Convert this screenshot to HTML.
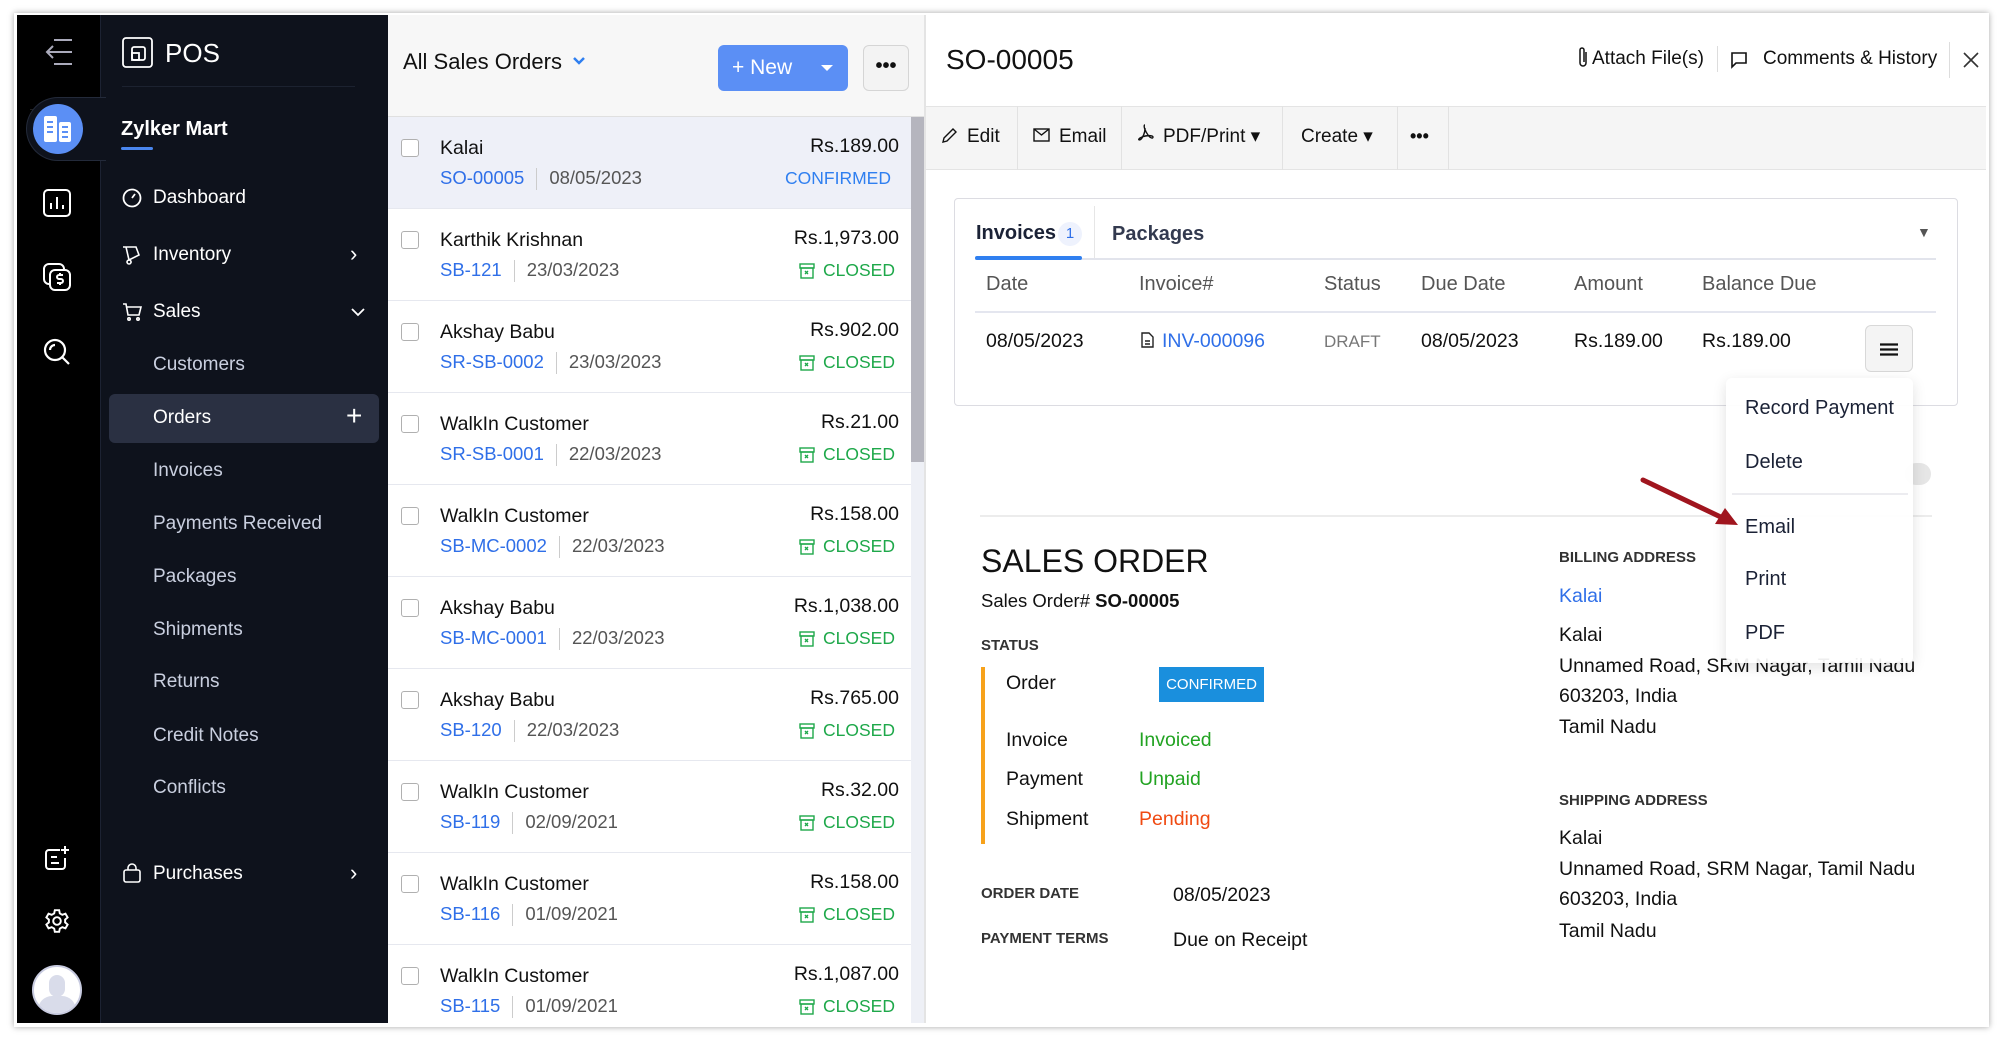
<!DOCTYPE html>
<html><head><meta charset="utf-8"><style>
*{box-sizing:border-box;margin:0;padding:0}
body{width:2000px;height:1039px;background:#fff;font-family:"Liberation Sans",sans-serif;position:relative;overflow:hidden;color:#111}
.a{position:absolute;white-space:nowrap}
.t{position:absolute;white-space:nowrap;line-height:24px}
.nav .t{color:#c9cfdf;font-size:19px}
.row{position:absolute;left:388px;width:523px;height:92px;border-bottom:1px solid #e6e8ef;background:#fff}
.row .cb{position:absolute;left:13px;top:22px;width:18px;height:18px;border:1.5px solid #b0b0b0;border-radius:3px;background:#fff}
.row .nm{position:absolute;left:52px;top:19px;font-size:19.5px;color:#111;line-height:24px}
.row .l2{position:absolute;left:52px;top:49px;font-size:18.5px;line-height:24px;color:#555}
.row .l2 b{font-weight:normal;color:#2f6fe8}
.row .l2 i{display:inline-block;width:1px;height:22px;background:#ccc;vertical-align:middle;margin:0 12px}
.row .am{position:absolute;right:12px;top:17px;font-size:19.5px;line-height:24px;color:#111}
.row .st{position:absolute;right:16px;top:49px;font-size:17.5px;line-height:24px;color:#1ea84a}
.st svg{vertical-align:-3px;margin-right:8px}
.dt{font-size:19.5px;color:#111}
.lbl{font-size:15px;font-weight:bold;color:#333}
.mi{font-size:20px;color:#1b2236}
</style></head><body>
<div class="a" style="left:14px;top:13px;width:1975px;height:1014px;box-shadow:0 0 6px rgba(0,0,0,.35);background:#fff"></div>
<div class="a" style="left:17px;top:15px;width:83px;height:1008px;background:#000"></div>
<div class="a" style="left:30px;top:109px;width:68px;height:1px;background:#222"></div>
<svg class="a" style="left:44px;top:38px" width="30" height="28" viewBox="0 0 30 28" fill="none" stroke="#aab" stroke-width="2"><path d="M10 2h18M3 14h25M10 26h18M9 8l-6 6 6 6"/></svg>
<div class="a" style="left:100px;top:15px;width:288px;height:1008px;background:#0e121c;border-left:1px solid #1c2232"></div>
<div class="a" style="left:26px;top:97px;width:80px;height:64px;background:#0e121c;border-radius:32px 0 0 32px;border:1px solid #232a3a;border-right:none"></div>
<div class="a" style="left:33px;top:104px;width:50px;height:50px;border-radius:50%;background:#5b8ff5"></div>
<svg class="a" style="left:43px;top:115px" width="30" height="28" viewBox="0 0 30 28"><rect x="1" y="1" width="13" height="26" rx="2" fill="#fff"/><rect x="16" y="7" width="12" height="20" rx="2" fill="#fff"/><path d="M4 7h6M4 12h6M4 17h6M19 12h6M19 17h6M19 22h6" stroke="#5b8ff5" stroke-width="2"/></svg>
<svg class="a" style="left:43px;top:189px" width="28" height="28" viewBox="0 0 28 28" fill="none" stroke="#fff" stroke-width="2"><rect x="1" y="1" width="26" height="26" rx="4"/><path d="M8 20v-6M14 20V8M20 20v-4"/></svg>
<svg class="a" style="left:43px;top:263px" width="28" height="28" viewBox="0 0 28 28" fill="none" stroke="#fff" stroke-width="2"><rect x="1" y="1" width="20" height="20" rx="5"/><rect x="7" y="7" width="20" height="20" rx="5" fill="#000"/><path d="M20 12h-4a2 2 0 0 0 0 4h2a2 2 0 0 1 0 4h-4M17 10v2M17 20v2"/></svg>
<svg class="a" style="left:43px;top:338px" width="28" height="28" viewBox="0 0 28 28" fill="none" stroke="#fff" stroke-width="2.2"><circle cx="12" cy="12" r="10"/><path d="M19 19l7 7M7 12a5 5 0 0 1 5-5"/></svg>
<svg class="a" style="left:44px;top:845px" width="26" height="26" viewBox="0 0 26 26" fill="none" stroke="#fff" stroke-width="2"><path d="M16 5H5a3 3 0 0 0-3 3v13a3 3 0 0 0 3 3h13a3 3 0 0 0 3-3v-8M7 12h6M7 18h8M21 1v8M17 5h8"/></svg>
<svg class="a" style="left:44px;top:908px" width="26" height="26" viewBox="0 0 24 24" fill="none" stroke="#fff" stroke-width="1.8"><circle cx="12" cy="12" r="3.5"/><path d="M10 2h4l.6 3 2.3 1.3 2.9-1 2 3.4-2.3 2v2.6l2.3 2-2 3.4-2.9-1-2.3 1.3-.6 3h-4l-.6-3-2.3-1.3-2.9 1-2-3.4 2.3-2v-2.6l-2.3-2 2-3.4 2.9 1L9.4 5z"/></svg>
<div class="a" style="left:32px;top:965px;width:50px;height:50px;border-radius:50%;background:#fff;overflow:hidden;border:2px solid #c8cbe0"><div class="a" style="left:15px;top:8px;width:16px;height:22px;border-radius:8px;background:#d9dcea"></div><div class="a" style="left:4px;top:29px;width:38px;height:24px;border-radius:14px 14px 0 0;background:#d9dcea"></div></div>
<div class="nav">
<svg class="a" style="left:122px;top:37px" width="31" height="31" viewBox="0 0 31 31" fill="none" stroke="#fff" stroke-width="1.8"><rect x="1" y="1" width="29" height="29" rx="3"/><rect x="10" y="10" width="13" height="13" rx="2"/><rect x="10" y="16" width="7" height="7"/></svg>
<div class="t" style="left:165px;top:40px;font-size:26px;color:#fff;line-height:26px">POS</div>
<div class="a" style="left:122px;top:86px;width:233px;height:1px;background:#1c2230"></div>
<div class="t" style="left:121px;top:117px;font-size:20px;color:#fff;font-weight:bold">Zylker Mart</div>
<div class="a" style="left:121px;top:147px;width:32px;height:3px;background:#4a86ee;border-radius:2px"></div>
<svg class="a" style="left:122px;top:188px" width="20" height="20" viewBox="0 0 20 20" fill="none" stroke="#fff" stroke-width="1.8"><circle cx="10" cy="10" r="8.5"/><path d="M10 10l3-4"/></svg>
<div class="t" style="left:153px;top:186px;color:#fff">Dashboard</div>
<svg class="a" style="left:122px;top:245px" width="20" height="20" viewBox="0 0 20 20" fill="none" stroke="#fff" stroke-width="1.6"><path d="M1 2h3l3 13 10-5-3-8zM7 15a2 2 0 1 0 0.1 0"/></svg>
<div class="t" style="left:153px;top:243px;color:#fff">Inventory</div>
<div class="t" style="left:350px;top:242px;color:#fff;font-size:22px">›</div>
<svg class="a" style="left:122px;top:302px" width="20" height="20" viewBox="0 0 20 20" fill="none" stroke="#fff" stroke-width="1.6"><path d="M1 2h3l2 11h11l2-8H5"/><circle cx="7" cy="17" r="1.2"/><circle cx="16" cy="17" r="1.2"/></svg>
<div class="t" style="left:153px;top:300px;color:#fff">Sales</div>
<svg class="a" style="left:350px;top:307px" width="16" height="10" viewBox="0 0 16 10" fill="none" stroke="#fff" stroke-width="1.8"><path d="M2 2l6 6 6-6"/></svg>
<div class="t" style="left:153px;top:353px">Customers</div>
<div class="a" style="left:109px;top:394px;width:270px;height:49px;background:#2a3042;border-radius:6px"></div>
<div class="t" style="left:153px;top:406px;color:#fff">Orders</div>
<div class="t" style="left:346px;top:404px;color:#fff;font-size:28px;font-weight:300">+</div>
<div class="t" style="left:153px;top:459px">Invoices</div>
<div class="t" style="left:153px;top:512px">Payments Received</div>
<div class="t" style="left:153px;top:565px">Packages</div>
<div class="t" style="left:153px;top:618px">Shipments</div>
<div class="t" style="left:153px;top:670px">Returns</div>
<div class="t" style="left:153px;top:724px">Credit Notes</div>
<div class="t" style="left:153px;top:776px">Conflicts</div>
<svg class="a" style="left:123px;top:863px" width="18" height="20" viewBox="0 0 18 20" fill="none" stroke="#fff" stroke-width="1.6"><rect x="1" y="7" width="16" height="12" rx="2"/><path d="M5 7V5a4 4 0 0 1 8 0v2"/></svg>
<div class="t" style="left:153px;top:862px;color:#fff">Purchases</div>
<div class="t" style="left:350px;top:861px;color:#fff;font-size:22px">›</div>
</div>
<div class="a" style="left:388px;top:15px;width:537px;height:102px;background:#f7f7f7;border-bottom:1px solid #e0e0e0"></div>
<div class="t" style="left:403px;top:50px;font-size:22px;color:#111">All Sales Orders <svg width="14" height="10" viewBox="0 0 14 10" fill="none" stroke="#2f7ff0" stroke-width="2.5" style="vertical-align:3px;margin-left:4px"><path d="M2 2l5 5 5-5"/></svg></div>
<div class="a" style="left:718px;top:45px;width:130px;height:46px;background:#5b8ff5;border-radius:6px"></div>
<div class="t" style="left:732px;top:56px;font-size:21px;color:#fff">+ New</div>
<svg class="a" style="left:820px;top:64px" width="14" height="8"><path d="M1 1h12L7 7z" fill="#fff"/></svg>
<div class="a" style="left:863px;top:45px;width:46px;height:46px;border:1px solid #d5d5d5;border-radius:6px;background:#f3f3f3;text-align:center;line-height:40px;font-size:20px;font-weight:bold">•••</div>
<div class="row" style="top:117px;background:#eef0f8"><div class="cb"></div><div class="nm">Kalai</div><div class="l2"><b>SO-00005</b><i></i>08/05/2023</div><div class="am">Rs.189.00</div><div class="st" style="color:#2f7ff0;right:20px">CONFIRMED</div></div>
<div class="row" style="top:209px"><div class="cb"></div><div class="nm">Karthik Krishnan</div><div class="l2"><b>SB-121</b><i></i>23/03/2023</div><div class="am">Rs.1,973.00</div><div class="st"><svg width="16" height="16" viewBox="0 0 16 16" fill="none" stroke="#1ea84a" stroke-width="1.4"><rect x="1" y="1" width="14" height="4"/><rect x="2" y="5" width="12" height="10"/><path d="M6 8l3 3M9 8l-3 3"/></svg>CLOSED</div></div>
<div class="row" style="top:301px"><div class="cb"></div><div class="nm">Akshay Babu</div><div class="l2"><b>SR-SB-0002</b><i></i>23/03/2023</div><div class="am">Rs.902.00</div><div class="st"><svg width="16" height="16" viewBox="0 0 16 16" fill="none" stroke="#1ea84a" stroke-width="1.4"><rect x="1" y="1" width="14" height="4"/><rect x="2" y="5" width="12" height="10"/><path d="M6 8l3 3M9 8l-3 3"/></svg>CLOSED</div></div>
<div class="row" style="top:393px"><div class="cb"></div><div class="nm">WalkIn Customer</div><div class="l2"><b>SR-SB-0001</b><i></i>22/03/2023</div><div class="am">Rs.21.00</div><div class="st"><svg width="16" height="16" viewBox="0 0 16 16" fill="none" stroke="#1ea84a" stroke-width="1.4"><rect x="1" y="1" width="14" height="4"/><rect x="2" y="5" width="12" height="10"/><path d="M6 8l3 3M9 8l-3 3"/></svg>CLOSED</div></div>
<div class="row" style="top:485px"><div class="cb"></div><div class="nm">WalkIn Customer</div><div class="l2"><b>SB-MC-0002</b><i></i>22/03/2023</div><div class="am">Rs.158.00</div><div class="st"><svg width="16" height="16" viewBox="0 0 16 16" fill="none" stroke="#1ea84a" stroke-width="1.4"><rect x="1" y="1" width="14" height="4"/><rect x="2" y="5" width="12" height="10"/><path d="M6 8l3 3M9 8l-3 3"/></svg>CLOSED</div></div>
<div class="row" style="top:577px"><div class="cb"></div><div class="nm">Akshay Babu</div><div class="l2"><b>SB-MC-0001</b><i></i>22/03/2023</div><div class="am">Rs.1,038.00</div><div class="st"><svg width="16" height="16" viewBox="0 0 16 16" fill="none" stroke="#1ea84a" stroke-width="1.4"><rect x="1" y="1" width="14" height="4"/><rect x="2" y="5" width="12" height="10"/><path d="M6 8l3 3M9 8l-3 3"/></svg>CLOSED</div></div>
<div class="row" style="top:669px"><div class="cb"></div><div class="nm">Akshay Babu</div><div class="l2"><b>SB-120</b><i></i>22/03/2023</div><div class="am">Rs.765.00</div><div class="st"><svg width="16" height="16" viewBox="0 0 16 16" fill="none" stroke="#1ea84a" stroke-width="1.4"><rect x="1" y="1" width="14" height="4"/><rect x="2" y="5" width="12" height="10"/><path d="M6 8l3 3M9 8l-3 3"/></svg>CLOSED</div></div>
<div class="row" style="top:761px"><div class="cb"></div><div class="nm">WalkIn Customer</div><div class="l2"><b>SB-119</b><i></i>02/09/2021</div><div class="am">Rs.32.00</div><div class="st"><svg width="16" height="16" viewBox="0 0 16 16" fill="none" stroke="#1ea84a" stroke-width="1.4"><rect x="1" y="1" width="14" height="4"/><rect x="2" y="5" width="12" height="10"/><path d="M6 8l3 3M9 8l-3 3"/></svg>CLOSED</div></div>
<div class="row" style="top:853px"><div class="cb"></div><div class="nm">WalkIn Customer</div><div class="l2"><b>SB-116</b><i></i>01/09/2021</div><div class="am">Rs.158.00</div><div class="st"><svg width="16" height="16" viewBox="0 0 16 16" fill="none" stroke="#1ea84a" stroke-width="1.4"><rect x="1" y="1" width="14" height="4"/><rect x="2" y="5" width="12" height="10"/><path d="M6 8l3 3M9 8l-3 3"/></svg>CLOSED</div></div>
<div class="row" style="top:945px;height:78px;border:none"><div class="cb"></div><div class="nm">WalkIn Customer</div><div class="l2"><b>SB-115</b><i></i>01/09/2021</div><div class="am">Rs.1,087.00</div><div class="st"><svg width="16" height="16" viewBox="0 0 16 16" fill="none" stroke="#1ea84a" stroke-width="1.4"><rect x="1" y="1" width="14" height="4"/><rect x="2" y="5" width="12" height="10"/><path d="M6 8l3 3M9 8l-3 3"/></svg>CLOSED</div></div>
<div class="a" style="left:911px;top:117px;width:13px;height:906px;background:#eef0f6"></div>
<div class="a" style="left:911px;top:117px;width:13px;height:345px;background:#b5b5be"></div>
<div class="a" style="left:924px;top:15px;width:2px;height:1008px;background:#e4e4e4"></div>
<div class="t" style="left:946px;top:45px;font-size:28px;line-height:30px;color:#111">SO-00005</div>
<svg class="a" style="left:1577px;top:46px" width="12" height="22" viewBox="0 0 12 22" fill="none" stroke="#111" stroke-width="1.5"><path d="M9 6v11a3 3 0 0 1-6 0V4a2 2 0 0 1 4 0v12"/></svg>
<div class="t" style="left:1592px;top:47px;font-size:19px;color:#111">Attach File(s)</div>
<div class="a" style="left:1717px;top:46px;width:1px;height:26px;background:#ddd"></div>
<svg class="a" style="left:1730px;top:51px" width="18" height="18" viewBox="0 0 18 18" fill="none" stroke="#111" stroke-width="1.6"><path d="M2 2h14v10H6l-4 4z"/></svg>
<div class="t" style="left:1763px;top:47px;font-size:19px;color:#111">Comments &amp; History</div>
<div class="a" style="left:1949px;top:42px;width:1px;height:36px;background:#ddd"></div>
<svg class="a" style="left:1962px;top:51px" width="18" height="18" fill="none" stroke="#333" stroke-width="1.6"><path d="M2 2l14 14M16 2L2 16"/></svg>
<div class="a" style="left:926px;top:106px;width:1060px;height:64px;background:#f5f5f5;border-top:1px solid #e4e4e4;border-bottom:1px solid #e4e4e4"></div>
<div class="a" style="left:1017px;top:106px;width:1px;height:64px;background:#e2e2e2"></div>
<div class="a" style="left:1121px;top:106px;width:1px;height:64px;background:#e2e2e2"></div>
<div class="a" style="left:1282px;top:106px;width:1px;height:64px;background:#e2e2e2"></div>
<div class="a" style="left:1397px;top:106px;width:1px;height:64px;background:#e2e2e2"></div>
<div class="a" style="left:1448px;top:106px;width:1px;height:64px;background:#e2e2e2"></div>
<svg class="a" style="left:941px;top:127px" width="16" height="17" fill="none" stroke="#111" stroke-width="1.4"><path d="M2 15l1-4 9-9 3 3-9 9z"/></svg>
<div class="t" style="left:967px;top:125px;font-size:19px">Edit</div>
<svg class="a" style="left:1033px;top:128px" width="17" height="14" fill="none" stroke="#111" stroke-width="1.4"><rect x="1" y="1" width="15" height="12"/><path d="M1 1l7.5 6L16 1"/></svg>
<div class="t" style="left:1059px;top:125px;font-size:19px">Email</div>
<svg class="a" style="left:1137px;top:124px" width="17" height="18" fill="none" stroke="#111" stroke-width="1.4"><path d="M8 1c-2 0 0 6 3 10 2 3 5 4 5 2s-8-2-13 1c-3 2 0 3 2 0s3-7 3-10"/></svg>
<div class="t" style="left:1163px;top:125px;font-size:19px">PDF/Print ▾</div>
<div class="t" style="left:1301px;top:125px;font-size:19px">Create ▾</div>
<div class="t" style="left:1410px;top:124px;font-size:18px;font-weight:bold">•••</div>
<div class="a" style="left:954px;top:198px;width:1004px;height:208px;border:1px solid #dcdce2;border-radius:4px"></div>
<div class="t" style="left:976px;top:221px;font-size:20px;font-weight:bold;color:#1b2236">Invoices</div>
<div class="a" style="left:1058px;top:222px;width:24px;height:24px;border-radius:50%;background:#eef2fd;color:#2f6fe8;font-size:15px;text-align:center;line-height:24px">1</div>
<div class="a" style="left:1094px;top:206px;width:1px;height:53px;background:#e6e6e6"></div>
<div class="t" style="left:1112px;top:222px;font-size:20px;font-weight:bold;color:#333a4f">Packages</div>
<div class="t" style="left:1917px;top:220px;font-size:14px;color:#555">▼</div>
<div class="a" style="left:975px;top:258px;width:961px;height:2px;background:#e2e4ec"></div>
<div class="a" style="left:975px;top:256px;width:107px;height:4px;background:#2f7ff0;border-radius:2px"></div>
<div style="font-size:20px;color:#555">
<div class="t" style="left:986px;top:272px">Date</div>
<div class="t" style="left:1139px;top:272px">Invoice#</div>
<div class="t" style="left:1324px;top:272px">Status</div>
<div class="t" style="left:1421px;top:272px">Due Date</div>
<div class="t" style="left:1574px;top:272px">Amount</div>
<div class="t" style="left:1702px;top:272px">Balance Due</div>
</div>
<div class="a" style="left:975px;top:311px;width:961px;height:2px;background:#e4e6ef"></div>
<div class="t dt" style="left:986px;top:329px">08/05/2023</div>
<svg class="a" style="left:1141px;top:332px" width="13" height="16" fill="none" stroke="#222" stroke-width="1.4"><path d="M1 1h7l4 4v10H1z"/><path d="M4 9h5M4 12h5"/></svg>
<div class="t dt" style="left:1162px;top:329px;color:#2f6fe8">INV-000096</div>
<div class="t" style="left:1324px;top:330px;font-size:17px;color:#777">DRAFT</div>
<div class="t dt" style="left:1421px;top:329px">08/05/2023</div>
<div class="t dt" style="left:1574px;top:329px">Rs.189.00</div>
<div class="t dt" style="left:1702px;top:329px">Rs.189.00</div>
<div class="a" style="left:1865px;top:325px;width:48px;height:47px;border:1px solid #d8d8d8;border-radius:6px;background:#f4f4f4"></div>
<svg class="a" style="left:1880px;top:343px" width="18" height="13"><path d="M0 1.5h18M0 6.5h18M0 11.5h18" stroke="#111" stroke-width="2.2"/></svg>
<div class="a" style="left:1905px;top:463px;width:26px;height:22px;border-radius:11px;background:#e6e6e6"></div>
<div class="a" style="left:980px;top:515px;width:952px;height:2px;background:#ececec"></div>
<div class="t" style="left:981px;top:545px;font-size:32px;line-height:32px;color:#111">SALES ORDER</div>
<div class="t" style="left:981px;top:589px;font-size:18.5px">Sales Order# <b>SO-00005</b></div>
<div class="t lbl" style="left:981px;top:634px">STATUS</div>
<div class="a" style="left:981px;top:667px;width:4px;height:177px;background:#f7a21b"></div>
<div class="t dt" style="left:1006px;top:671px">Order</div>
<div class="a" style="left:1159px;top:667px;width:105px;height:35px;background:#1a8fdd;color:#fff;font-size:15px;text-align:center;line-height:35px">CONFIRMED</div>
<div class="t dt" style="left:1006px;top:728px">Invoice</div>
<div class="t dt" style="left:1139px;top:728px;color:#22a322">Invoiced</div>
<div class="t dt" style="left:1006px;top:767px">Payment</div>
<div class="t dt" style="left:1139px;top:767px;color:#22a322">Unpaid</div>
<div class="t dt" style="left:1006px;top:807px">Shipment</div>
<div class="t dt" style="left:1139px;top:807px;color:#f04a12">Pending</div>
<div class="t lbl" style="left:981px;top:882px">ORDER DATE</div>
<div class="t dt" style="left:1173px;top:883px">08/05/2023</div>
<div class="t lbl" style="left:981px;top:927px">PAYMENT TERMS</div>
<div class="t dt" style="left:1173px;top:928px">Due on Receipt</div>
<div class="t lbl" style="left:1559px;top:546px">BILLING ADDRESS</div>
<div class="t dt" style="left:1559px;top:584px;color:#2f6fe8">Kalai</div>
<div class="t dt" style="left:1559px;top:623px">Kalai</div>
<div class="t dt" style="left:1559px;top:654px">Unnamed Road, SRM Nagar, Tamil Nadu</div>
<div class="t dt" style="left:1559px;top:684px">603203, India</div>
<div class="t dt" style="left:1559px;top:715px">Tamil Nadu</div>
<div class="t lbl" style="left:1559px;top:789px">SHIPPING ADDRESS</div>
<div class="t dt" style="left:1559px;top:826px">Kalai</div>
<div class="t dt" style="left:1559px;top:857px">Unnamed Road, SRM Nagar, Tamil Nadu</div>
<div class="t dt" style="left:1559px;top:887px">603203, India</div>
<div class="t dt" style="left:1559px;top:919px">Tamil Nadu</div>
<div class="a" style="left:1726px;top:378px;width:187px;height:285px;background:rgba(255,255,255,.93);border-radius:6px;box-shadow:0 4px 14px rgba(0,0,0,.12)"></div>
<div class="t mi" style="left:1745px;top:396px">Record Payment</div>
<div class="t mi" style="left:1745px;top:450px">Delete</div>
<div class="a" style="left:1732px;top:493px;width:176px;height:2px;background:#ececf0"></div>
<div class="t mi" style="left:1745px;top:515px">Email</div>
<div class="t mi" style="left:1745px;top:567px">Print</div>
<div class="t mi" style="left:1745px;top:621px">PDF</div>
<svg class="a" style="left:1635px;top:470px" width="110" height="65" viewBox="0 0 110 65"><path d="M8 10L92 50" stroke="#a0151e" stroke-width="5" stroke-linecap="round"/><path d="M103 55L80 54 90 38z" fill="#a0151e"/></svg>
</body></html>
